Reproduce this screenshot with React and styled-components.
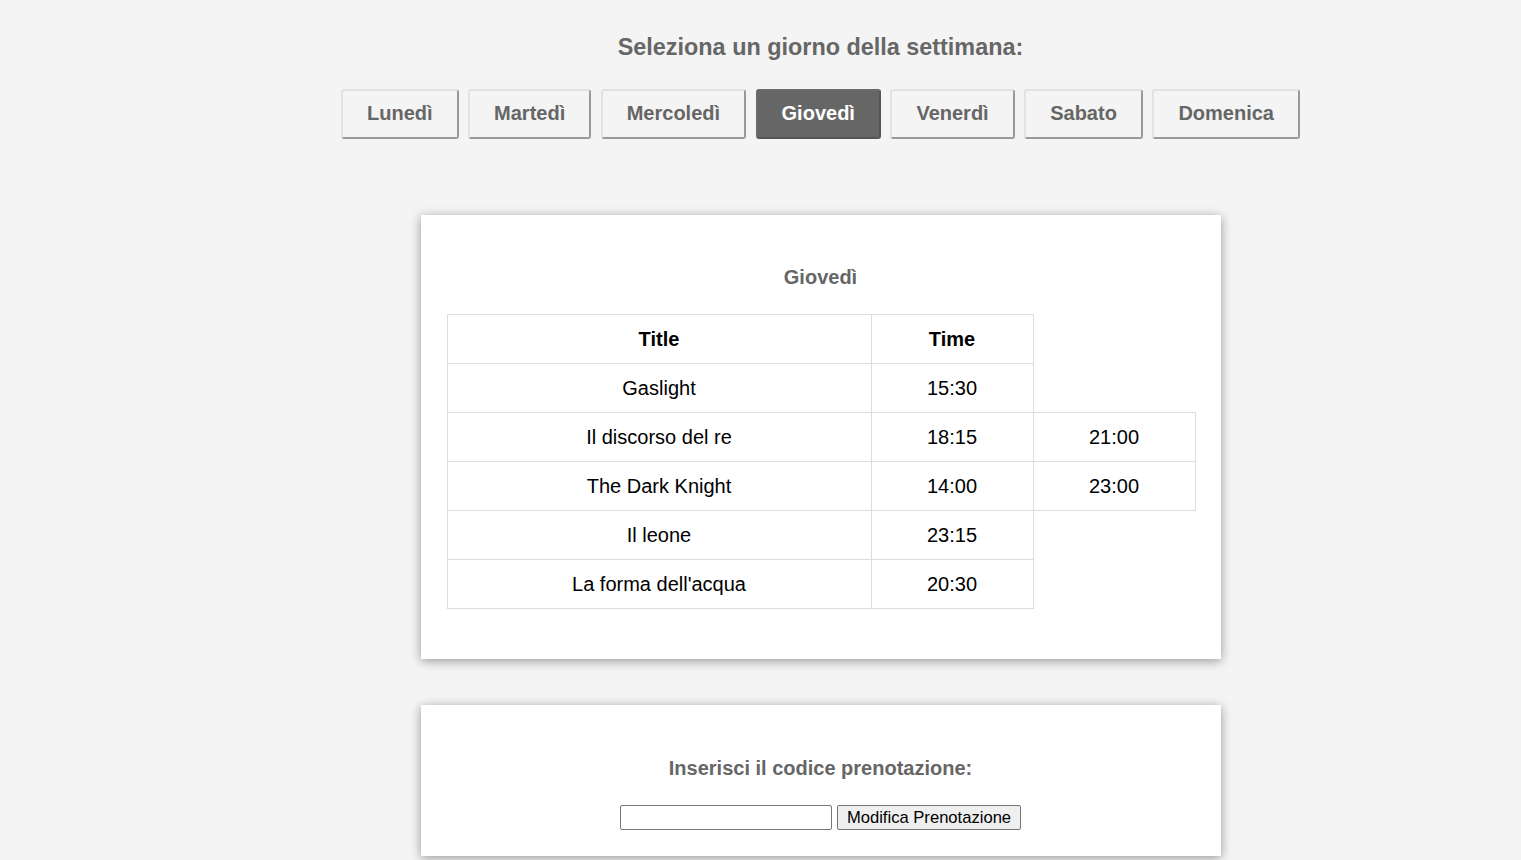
import React, { useState } from 'react'
import styled, { createGlobalStyle } from 'styled-components'

const GlobalStyle = createGlobalStyle`
  html, body {
    margin: 0;
    padding: 0;
    background: #f4f4f4;
    font-family: 'Liberation Sans', Arial, sans-serif;
    overflow: hidden;
  }
`

const Page = styled.div`
  width: 1521px;
  height: 860px;
  box-sizing: border-box;
  padding: 33px 0 0 120px;
  display: flex;
  flex-direction: column;
  align-items: center;
`

const PageTitle = styled.h2`
  margin: 0;
  font-size: 23.4px;
  line-height: 28px;
  font-weight: bold;
  color: #666;
`

const DayBar = styled.div`
  display: flex;
  gap: 9.5px;
  margin-top: 28px;
`

const DayButton = styled.button`
  height: 50px;
  padding: 0 24px 2px;
  box-sizing: border-box;
  border-style: solid;
  border-width: 2px;
  border-color: ${(p) => (p.$active ? '#6a6a6a #555 #555 #6a6a6a' : '#e2e2e2 #999 #999 #e2e2e2')};
  border-radius: 3px;
  background: ${(p) => (p.$active ? '#666' : '#f4f4f4')};
  color: ${(p) => (p.$active ? '#fff' : '#666')};
  font-family: 'Liberation Sans', Arial, sans-serif;
  font-size: 20px;
  font-weight: bold;
  cursor: pointer;
`

const Card = styled.section`
  width: 800px;
  box-sizing: border-box;
  background: #fff;
  padding: 26px;
  box-shadow: 0 2px 10px rgba(0, 0, 0, 0.38);
  margin-top: ${(p) => p.$gap}px;
  display: flex;
  flex-direction: column;
  align-items: center;
`

const CardTitle = styled.h3`
  margin: ${(p) => p.$top}px 0 ${(p) => p.$bottom}px;
  font-size: 20px;
  line-height: 23px;
  font-weight: bold;
  color: #666;
`

const Table = styled.table`
  width: 748px;
  table-layout: fixed;
  border-collapse: collapse;
  margin-bottom: 24px;
  align-self: flex-start;

  th,
  td {
    border: 1px solid #ddd;
    padding: 12px 0;
    line-height: 24px;
    font-size: 20px;
    text-align: center;
    color: #000;
  }

  th {
    font-weight: bold;
  }
`

const CodeRow = styled.div`
  display: flex;
  gap: 5px;
`

const CodeInput = styled.input`
  width: 212px;
  height: 25px;
  box-sizing: border-box;
  border: 1px solid #767676;
  border-radius: 2px;
  background: #fff;
  padding: 1px 2px;
  font-size: 16px;
`

const CodeButton = styled.button`
  height: 25px;
  box-sizing: border-box;
  padding: 0 9px;
  border: 1px solid #767676;
  border-radius: 2px;
  background: #efefef;
  color: #000;
  font-family: 'Liberation Sans', Arial, sans-serif;
  font-size: 16.6px;
  line-height: 21px;
`

const days = ['Lunedì', 'Martedì', 'Mercoledì', 'Giovedì', 'Venerdì', 'Sabato', 'Domenica']

const shows = [
  { title: 'Gaslight', times: ['15:30'] },
  { title: 'Il discorso del re', times: ['18:15', '21:00'] },
  { title: 'The Dark Knight', times: ['14:00', '23:00'] },
  { title: 'Il leone', times: ['23:15'] },
  { title: "La forma dell'acqua", times: ['20:30'] },
]

function App() {
  const [day, setDay] = useState('Giovedì')
  const [code, setCode] = useState('')

  return (
    <>
      <GlobalStyle />
      <Page>
        <PageTitle>Seleziona un giorno della settimana:</PageTitle>
        <DayBar>
          {days.map((d) => (
            <DayButton key={d} $active={d === day} onClick={() => setDay(d)}>
              {d}
            </DayButton>
          ))}
        </DayBar>

        <Card $gap={76}>
          <CardTitle $top={25} $bottom={25}>
            {day}
          </CardTitle>
          <Table>
            <colgroup>
              <col style={{ width: 424 }} />
              <col style={{ width: 162 }} />
              <col style={{ width: 162 }} />
            </colgroup>
            <thead>
              <tr>
                <th>Title</th>
                <th>Time</th>
              </tr>
            </thead>
            <tbody>
              {shows.map((s) => (
                <tr key={s.title}>
                  <td>{s.title}</td>
                  {s.times.map((t) => (
                    <td key={t}>{t}</td>
                  ))}
                </tr>
              ))}
            </tbody>
          </Table>
        </Card>

        <Card $gap={46}>
          <CardTitle $top={26} $bottom={25}>
            Inserisci il codice prenotazione:
          </CardTitle>
          <CodeRow>
            <CodeInput value={code} onChange={(e) => setCode(e.target.value)} />
            <CodeButton>Modifica Prenotazione</CodeButton>
          </CodeRow>
        </Card>
      </Page>
    </>
  )
}

export default App
